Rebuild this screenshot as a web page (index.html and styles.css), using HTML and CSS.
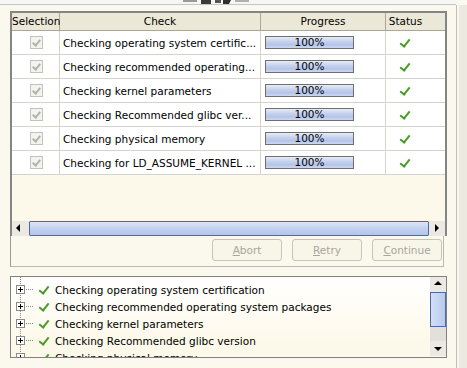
FILE: index.html
```html
<!DOCTYPE html>
<html lang="en">
<head>
  <meta charset="UTF-8" />
  <title>Prerequisite Checks</title>
  <link rel="stylesheet" href="styles.css">
</head>
<body>
  <!-- top edge with the cut-off banner -->
  <div class="top">
    <svg class="banner" width="70" height="4" viewBox="0 0 70 4">
      <path d="M0 0h14v2h-14z" fill="#9a9a9a"/>
      <path d="M18 0h10v4h-10z" fill="#3a3a3a"/>
      <path d="M32 0h6v3h-6z" fill="#555"/>
      <path d="M40 0h8l-2 4h-6z" fill="#2e2e2e"/>
      <path d="M52 0h14v2h-14z" fill="#b0b0b0"/>
    </svg>
  </div>

  <div class="main">
    <div class="content">
      <div class="panel">
        <div class="scrollpane">
          <div class="grid">
            <div class="hd">Selection</div>
            <div class="hd">Check</div>
            <div class="hd">Progress</div>
            <div class="hd last">Status</div>

            <div class="cell sel"><span class="cbox"></span></div>
            <div class="cell check">Checking operating system certific...</div>
            <div class="cell prog"><span class="bar">100%</span></div>
            <div class="cell stat"><span class="ok"></span></div>

            <div class="cell sel"><span class="cbox"></span></div>
            <div class="cell check">Checking recommended operating...</div>
            <div class="cell prog"><span class="bar">100%</span></div>
            <div class="cell stat"><span class="ok"></span></div>

            <div class="cell sel"><span class="cbox"></span></div>
            <div class="cell check">Checking kernel parameters</div>
            <div class="cell prog"><span class="bar">100%</span></div>
            <div class="cell stat"><span class="ok"></span></div>

            <div class="cell sel"><span class="cbox"></span></div>
            <div class="cell check">Checking Recommended glibc ver...</div>
            <div class="cell prog"><span class="bar">100%</span></div>
            <div class="cell stat"><span class="ok"></span></div>

            <div class="cell sel"><span class="cbox"></span></div>
            <div class="cell check">Checking physical memory</div>
            <div class="cell prog"><span class="bar">100%</span></div>
            <div class="cell stat"><span class="ok"></span></div>

            <div class="cell sel"><span class="cbox"></span></div>
            <div class="cell check">Checking for LD_ASSUME_KERNEL ...</div>
            <div class="cell prog"><span class="bar">100%</span></div>
            <div class="cell stat"><span class="ok"></span></div>
          </div>
          <div class="filler"></div>
          <!-- horizontal scrollbar -->
          <div class="hscroll">
            <span class="arrow left"></span>
            <span class="thumb"><span class="grip"></span></span>
            <span class="arrow right"></span>
          </div>
        </div>
        <div class="buttons">
          <button class="btn" disabled><u>A</u>bort</button>
          <button class="btn" disabled><u>R</u>etry</button>
          <button class="btn" disabled><u>C</u>ontinue</button>
        </div>
      </div>

      <!-- log tree -->
      <div class="log">
        <ul class="tree">
          <li><span class="plus"></span><span class="dots"></span><span class="ok"></span>Checking operating system certification</li>
          <li><span class="plus"></span><span class="dots"></span><span class="ok"></span>Checking recommended operating system packages</li>
          <li><span class="plus"></span><span class="dots"></span><span class="ok"></span>Checking kernel parameters</li>
          <li><span class="plus"></span><span class="dots"></span><span class="ok"></span>Checking Recommended glibc version</li>
          <li><span class="plus"></span><span class="dots"></span><span class="ok"></span>Checking physical memory</li>
        </ul>
        <div class="vscroll">
          <span class="arrow up"></span>
          <span class="vthumb"><span class="vgrip"></span></span>
          <span class="track"></span>
          <span class="arrow down"></span>
        </div>
      </div>
    </div>
    <div class="side"></div>
  </div>
</body>
</html>
```

FILE: styles.css
```css
/* basic reset */
* {
  margin: 0;
  padding: 0;
  box-sizing: border-box;
}
html, body {
  width: 467px;
  height: 368px;
  overflow: hidden;
}
body {
  font-family: 'DejaVu Sans', sans-serif;
  font-size: 10.5px;
  color: #000;
  background-color: #fbf8ee;
}
/* top edge */
.top {
  width: 456px;
  height: 5px;
  background-color: #f6f6f4;
  border-bottom: 1px solid #c4c4c4;
  padding-left: 183px;
}
.banner {
  display: block;
}
.main {
  display: flex;
  height: 363px;
}
.content {
  width: 456px;
  padding: 6px 0 0 10px;
}
.side {
  flex: 1;
  border-left: 1px solid #c2bfb4;
  background-color: #ece9e0;
  box-shadow: inset 2px 0 0 #f7f6f2;
}
/* table panel */
.panel {
  width: 434px;
  border-left: 1px solid #9c9c9c;
  border-right: 1px solid #bbb8ac;
  border-bottom: 1px solid #bbb8ac;
}
.scrollpane {
  width: 437px;
  margin-left: -1px;
  border: 2px solid #858585;
  border-bottom: none;
  background-color: #fdf9ea;
}
.grid {
  display: grid;
  grid-template-columns: 48px 201px 125px 59px;
}
.hd {
  height: 18px;
  background-color: #ebe8d7;
  border-right: 1px solid #a9a79d;
  border-bottom: 1px solid #a9a79d;
  text-align: center;
  line-height: 17px;
}
.hd.last {
  border-right: none;
  padding-right: 20px;
}
.cell {
  height: 24px;
  background-color: #fff;
  border-right: 1px solid #d6d3c9;
  border-bottom: 1px solid #d6d3c9;
  display: flex;
  align-items: center;
}
.sel {
  justify-content: center;
  padding-left: 1px;
}
.check {
  padding-left: 3px;
  white-space: nowrap;
  overflow: hidden;
}
.prog {
  padding-left: 4px;
}
.stat {
  border-right: none;
  justify-content: center;
  padding-right: 24px;
}
/* disabled checkbox */
.cbox {
  width: 13px;
  height: 13px;
  border: 1px solid #c3c3bd;
  background-color: #f3f3ef;
  position: relative;
}
.cbox::after {
  content: "";
  position: absolute;
  left: 3px;
  top: 1px;
  width: 3px;
  height: 6px;
  border-right: 2px solid #b3b3ad;
  border-bottom: 2px solid #b3b3ad;
  transform: rotate(40deg);
}
/* progress bar */
.bar {
  width: 89px;
  height: 13px;
  border: 1px solid #6f6f6f;
  background: linear-gradient(#e6ecf8, #c3d0ee 45%, #b4c4e8 70%, #cbd6f0);
  text-align: center;
  line-height: 11px;
}
/* green tick */
.ok {
  display: inline-block;
  width: 12px;
  height: 10px;
  position: relative;
}
.ok::after {
  content: "";
  position: absolute;
  left: 4px;
  top: -1px;
  width: 4px;
  height: 8px;
  border-right: 2px solid #4c9a2a;
  border-bottom: 2px solid #4c9a2a;
  transform: rotate(38deg);
}
.filler {
  height: 46px;
}
/* horizontal scrollbar */
.hscroll {
  display: flex;
  height: 15px;
}
.arrow {
  display: block;
  width: 16px;
  background-color: #ebe9e1;
  position: relative;
}
.arrow.left {
  width: 17px;
}
.arrow::after {
  content: "";
  position: absolute;
  border: 4px solid transparent;
}
.arrow.left::after {
  left: 4px;
  top: 3px;
  border-right: 4px solid #000;
  border-left-width: 0;
}
.arrow.right::after {
  left: 6px;
  top: 3px;
  border-left: 4px solid #000;
  border-right-width: 0;
}
.thumb {
  flex: 1;
  border: 1px solid #4e69a3;
  border-radius: 1px;
  background: linear-gradient(#dbe5f7, #c2d2f0 50%, #b3c6ea);
  display: flex;
  justify-content: center;
  align-items: center;
}
.grip {
  width: 22px;
  height: 8px;
  background-image: radial-gradient(circle, #f8fbff 45%, transparent 50%);
  background-size: 2px 2px;
}
/* disabled buttons */
.buttons {
  display: flex;
  justify-content: flex-end;
  gap: 10px;
  padding: 3px 1px 4px 0;
  height: 30px;
}
.btn {
  width: 70px;
  height: 22px;
  font-family: 'DejaVu Sans', sans-serif;
  font-size: 10.5px;
  color: #a8a69c;
  background-color: #f8f5e9;
  border: 1px solid #c8c5b6;
  border-radius: 3px;
}
/* log area */
.log {
  display: flex;
  width: 437px;
  height: 82px;
  margin-top: 9px;
  overflow: hidden;
  border: 1px solid #808080;
  background: linear-gradient(#ffffff, #fdf9ea 80%);
}
.tree {
  flex: 1;
  list-style: none;
  padding: 4px 0 0 5px;
  background-image: linear-gradient(#8a8a8a 50%, transparent 50%);
  background-size: 1px 2px;
  background-repeat: repeat-y;
  background-position: 9px 0;
}
.tree li {
  height: 17px;
  display: flex;
  align-items: center;
  white-space: nowrap;
}
.plus {
  width: 9px;
  height: 9px;
  border: 1px solid #8a8a8a;
  background: #fff;
  position: relative;
}
.plus::before,
.plus::after {
  content: "";
  position: absolute;
  background-color: #000;
}
.plus::before {
  left: 1px;
  top: 3px;
  width: 5px;
  height: 1px;
}
.plus::after {
  left: 3px;
  top: 1px;
  width: 1px;
  height: 5px;
}
.dots {
  width: 8px;
  height: 1px;
  margin-left: 1px;
  background-image: linear-gradient(90deg, #8a8a8a 50%, transparent 50%);
  background-size: 2px 1px;
}
.tree .ok {
  margin: 0 6px 0 3px;
}
.vscroll {
  width: 16px;
  display: flex;
  flex-direction: column;
}
.arrow.up,
.arrow.down {
  height: 15px;
  flex: none;
}
.arrow.up::after {
  left: 4px;
  top: 4px;
  border-bottom: 4px solid #000;
  border-top-width: 0;
}
.arrow.down::after {
  left: 4px;
  top: 6px;
  border-top: 4px solid #000;
  border-bottom-width: 0;
}
.vthumb {
  display: block;
  height: 35px;
  flex: none;
  border: 1px solid #4e69a3;
  background: linear-gradient(90deg, #d2def5, #b9cbee);
  padding: 5px 3px;
}
.vgrip {
  display: block;
  height: 100%;
  background-image: radial-gradient(circle, #f8fbff 45%, transparent 50%);
  background-size: 2px 2px;
}
.track {
  height: 14px;
  flex: none;
  background-color: #e2e0d8;
}
```
